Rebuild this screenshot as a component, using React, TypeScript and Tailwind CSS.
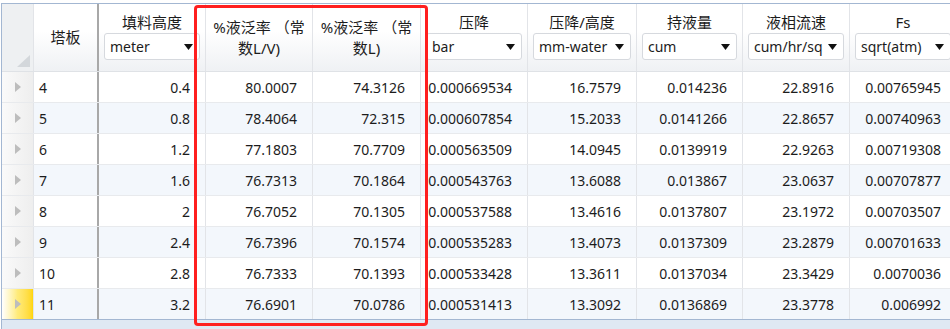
import React from 'react';

type Col = {
  key: string;
  label: string;
  unit?: string;
  width: string;
  wrap?: React.ReactNode;
  align: 'left' | 'right';
};

const cols: Col[] = [
  { key: 'stage', label: '塔板', width: 'w-[65px] border-r-2 border-r-[#a8a8a8]', align: 'left' },
  { key: 'h', label: '填料高度', unit: 'meter', width: 'w-[107px] border-r border-r-[#e2e4e8]', align: 'right' },
  { key: 'lv', label: '', width: 'w-[107px] border-r border-r-[#e2e4e8]', wrap: <>%液泛率 （常<br />数L/V)</>, align: 'right' },
  { key: 'l', label: '', width: 'w-[108px] border-r border-r-[#e2e4e8]', wrap: <>%液泛率 （常<br />数L)</>, align: 'right' },
  { key: 'dp', label: '压降', unit: 'bar', width: 'w-[107px] border-r border-r-[#e2e4e8]', align: 'right' },
  { key: 'dph', label: '压降/高度', unit: 'mm-water', width: 'w-[109px] border-r border-r-[#e2e4e8]', align: 'right' },
  { key: 'hold', label: '持液量', unit: 'cum', width: 'w-[106px] border-r border-r-[#e2e4e8]', align: 'right' },
  { key: 'vel', label: '液相流速', unit: 'cum/hr/sq', width: 'w-[107px] border-r border-r-[#e2e4e8]', align: 'right' },
  { key: 'fs', label: 'Fs', unit: 'sqrt(atm)', width: 'w-[107px] border-r border-r-[#e2e4e8]', align: 'right' },
];

const rows: string[][] = [
  ['4', '0.4', '80.0007', '74.3126', '0.000669534', '16.7579', '0.014236', '22.8916', '0.00765945'],
  ['5', '0.8', '78.4064', '72.315', '0.000607854', '15.2033', '0.0141266', '22.8657', '0.00740963'],
  ['6', '1.2', '77.1803', '70.7709', '0.000563509', '14.0945', '0.0139919', '22.9263', '0.00719308'],
  ['7', '1.6', '76.7313', '70.1864', '0.000543763', '13.6088', '0.013867', '23.0637', '0.00707877'],
  ['8', '2', '76.7052', '70.1305', '0.000537588', '13.4616', '0.0137807', '23.1972', '0.00703507'],
  ['9', '2.4', '76.7396', '70.1574', '0.000535283', '13.4073', '0.0137309', '23.2879', '0.00701633'],
  ['10', '2.8', '76.7333', '70.1393', '0.000533428', '13.3611', '0.0137034', '23.3429', '0.0070036'],
  ['11', '3.2', '76.6901', '70.0786', '0.000531413', '13.3092', '0.0136869', '23.3778', '0.006992'],
];

const Caret = () => (
  <svg width="9" height="6" viewBox="0 0 9 6" className="shrink-0">
    <path d="M0 0 H9 L4.5 6 Z" fill="#111" />
  </svg>
);

const RowArrow = () => (
  <svg width="6" height="10" viewBox="0 0 6 10">
    <path d="M0 0 L6 5 L0 10 Z" fill="#bdbdbd" />
  </svg>
);

const HeaderCell: React.FC<{ col: Col }> = ({ col }) => {
  if (col.wrap) {
    return (
      <div className={`${col.width} shrink-0 h-full flex items-center justify-center text-center text-[15px] leading-[21px] px-1`}>
        <span>{col.wrap}</span>
      </div>
    );
  }
  if (!col.unit) {
    return (
      <div className={`${col.width} shrink-0 h-full flex items-center justify-center text-[15px]`}>
        {col.label}
      </div>
    );
  }
  return (
    <div className={`${col.width} shrink-0 h-full flex flex-col items-stretch pt-[9px] px-[5px]`}>
      <div className="h-[21px] leading-[21px] text-center text-[15px] -mt-px">{col.label}</div>
      <div className="h-[27px] bg-white border border-[#d6d9de] rounded-[3px] flex items-center pl-[5px] pr-[6px] gap-1">
        <span className="flex-1 overflow-hidden whitespace-nowrap">{col.unit}</span>
        <Caret />
      </div>
    </div>
  );
};

const App: React.FC = () => {
  return (
    <div className="w-[950px] h-[329px] overflow-hidden bg-white relative text-[14px] text-[#1c1c1c] font-['Noto_Sans','Noto_Sans_CJK_SC',sans-serif]">
      <div className="mt-[3px] ml-px border-t border-l border-[#a3b7d2] w-[1000px]">
        {/* header */}
        <div className="flex h-[68px] border-b border-[#dfe2e6] bg-gradient-to-b from-white from-40% to-[#eff1f4]">
          <div className="w-[32px] shrink-0 h-full bg-[#eef0f2] border-r border-r-[#e2e4e8] relative">
            <svg width="13" height="12" viewBox="0 0 13 12" className="absolute right-[3px] bottom-[4px]">
              <path d="M13 0 V12 H0 Z" fill="#d3d7db" />
            </svg>
          </div>
          {cols.map(c => (
            <HeaderCell key={c.key} col={c} />
          ))}
        </div>

        {/* rows */}
        {rows.map((r, i) => {
          const selected = i === rows.length - 1;
          return (
            <div key={r[0]} className={`flex h-[31px] border-b border-[#e8eaed] ${i % 2 === 1 ? 'bg-[#f3f7fc]' : 'bg-white'}`}>
              <div
                className={`w-[32px] shrink-0 h-full border-r border-r-[#e2e4e8] flex items-center pl-[13px] ${
                  selected ? 'bg-gradient-to-r from-white via-[#ffeb7a] to-[#ffd600]' : 'bg-gradient-to-r from-[#fafafa] to-[#eeeeee]'
                }`}
              >
                <RowArrow />
              </div>
              {cols.map((c, j) => (
                <div
                  key={c.key}
                  className={`${c.width} shrink-0 h-full flex items-center whitespace-nowrap ${
                    c.align === 'left' ? 'justify-start pl-[5px]' : 'justify-end pr-[15px]'
                  }`}
                >
                  {r[j]}
                </div>
              ))}
            </div>
          );
        })}
        <div className="h-[20px] border-t border-[#a3b7d2] bg-[#dfe8f3] -mt-px"></div>
      </div>

      {/* highlight annotation */}
      <div className="absolute left-[194px] top-[5px] w-[234px] h-[321px] border-[3px] border-[#ff1f1f] rounded-[4px] pointer-events-none"></div>
    </div>
  );
};

export default App;
